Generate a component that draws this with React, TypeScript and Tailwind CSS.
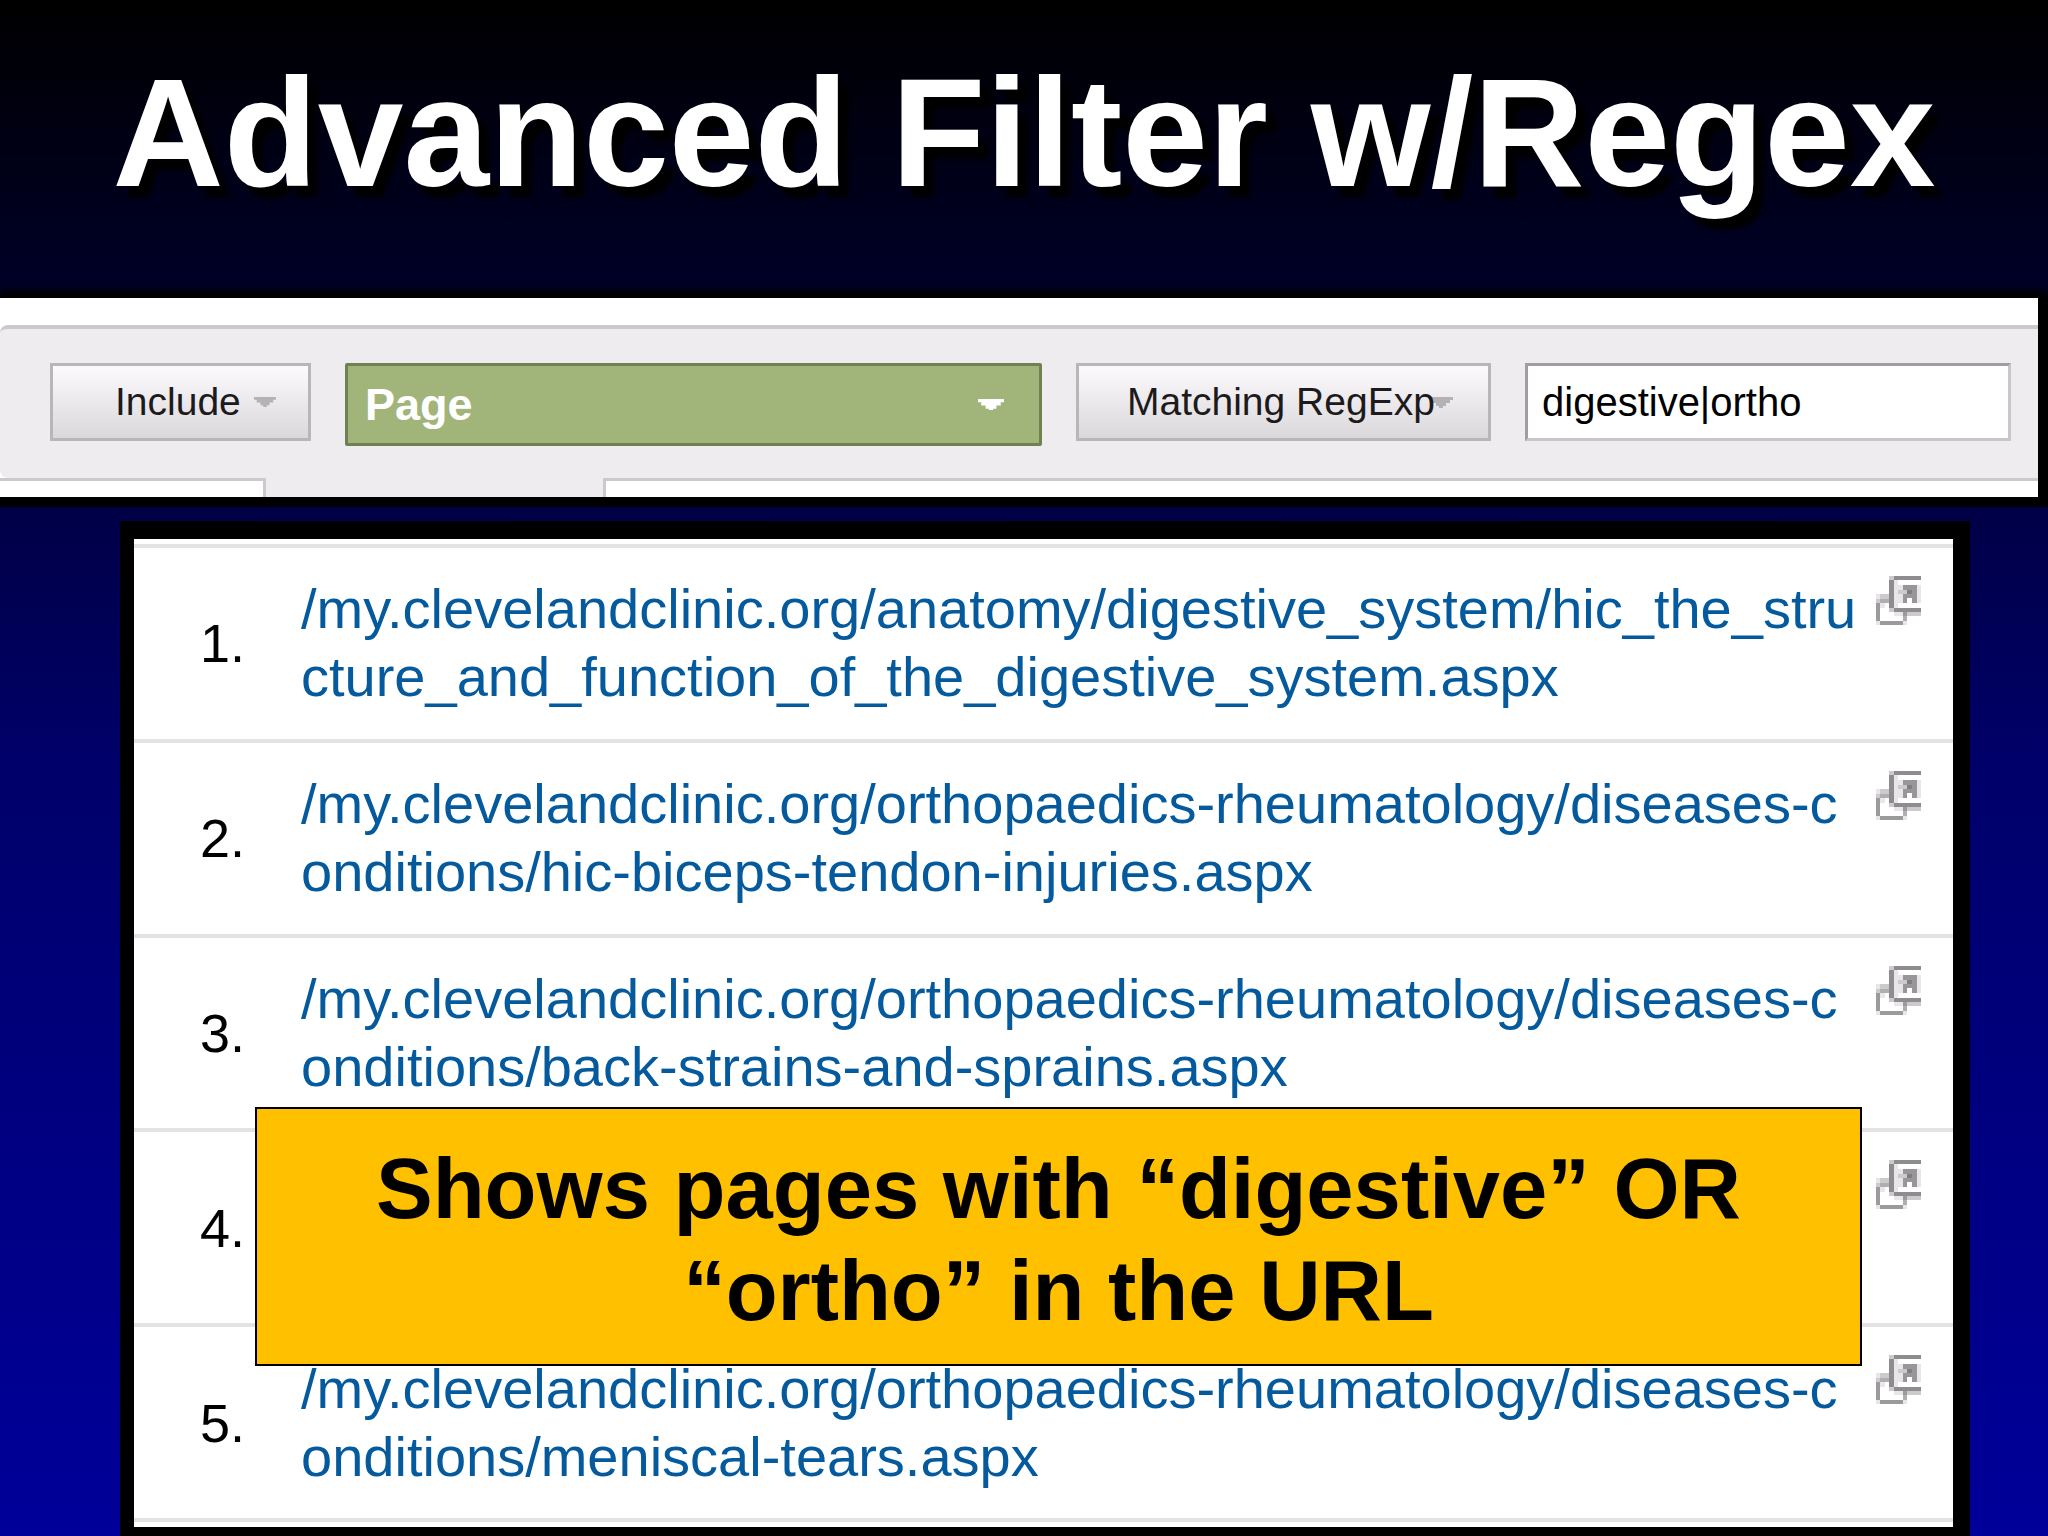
import React from "react";

const prefix = "/my.clevelandclinic.org/";
const rows: [string, string][] = [
  [prefix + "anatomy/digestive_system/hic_the_stru", "cture_and_function_of_the_digestive_system.aspx"],
  [prefix + "orthopaedics-rheumatology/diseases-c", "onditions/hic-biceps-tendon-injuries.aspx"],
  [prefix + "orthopaedics-rheumatology/diseases-c", "onditions/back-strains-and-sprains.aspx"],
  ["", ""],
  [prefix + "orthopaedics-rheumatology/diseases-c", "onditions/meniscal-tears.aspx"],
];

function Caret({ className }: { className: string }) {
  return (
    <svg viewBox="0 0 24 11" className={className} fill="currentColor" aria-hidden="true">
      <path d="M0 0h24v3h-3v3h-4v3h-3v2h-4v-2h-3v-3h-4v-3h-3z" />
    </svg>
  );
}

function PopoutIcon() {
  return (
    <svg viewBox="0 0 45 49" className="h-[49px] w-[45px]" shapeRendering="crispEdges" aria-hidden="true">
      <path fill="#e8e6e8" d="M0 18h13v5h-13zM18 4h4v28h-4zM22 9h5v18h-5zM41 9h4v18h-4zM18 36h9v4h-9zM4 27h5v5h-5zM27 45h4v4h-4zM0 45h4v4h-4z" />
      <path fill="#cccacc" d="M4 18h9v5h-9zM0 23h4v4h-4zM13 0h5v4h-5zM31 36h14v4h-14zM22 14h9v4h-9zM13 32h5v4h-5z" />
      <path fill="#b0aeb0" d="M4 23h9v4h-9zM27 40h4v5h-4z" />
      <path fill="#9c9a9c" d="M0 27h4v18h-4zM4 45h18v4h-18zM22 45h5v4h-5zM27 36h4v4h-4z" />
      <path fill="#8e8c8e" d="M18 0h27v4h-27zM13 4h5v28h-5zM18 32h27v4h-27z" />
      <path fill="#989698" d="M27 9h14v18h-5v-5h-5v5h-4v-9h4v-4h-4z" />
      <path fill="#807e80" d="M31 14h5v4h-5z" />
    </svg>
  );
}

export default function App() {
  return (
    <main className="flex min-h-screen flex-col bg-linear-to-b/srgb from-black via-[#00006a] via-50% to-[#00009a] font-['Liberation_Sans',Arial,sans-serif]">
      <header className="flex h-[298px] items-center justify-center pb-[32px]">
        <h1 className="whitespace-nowrap text-[154px] leading-none font-bold text-white [text-shadow:10px_11px_4px_#000]">
          Advanced Filter w/Regex
        </h1>
      </header>

      <section className="border-r-10 border-b-10 border-black bg-white shadow-[0_-8px_6px_#000]">
        <div className="mt-[27px] flex h-[153px] items-start gap-[34px] rounded-l-lg border-t-4 border-[#cbc9cb] bg-[#eeecef] pt-[34px] pr-[27px] pl-[50px]">
          <button className="relative h-[78px] w-[261px] border-3 border-[#b8b6b8] bg-linear-to-b from-[#fcfafc] to-[#dad8da] pl-[62px] text-left text-[39px] text-[#1c1a1c]">
            Include
            <Caret className="absolute top-[31px] right-[32px] w-[22px] text-[#b4b2b4]" />
          </button>
          <button className="flex h-[83px] flex-1 items-center justify-between rounded-xs border-3 border-[#6f8151] bg-[#a1b57a] pr-[35px] pl-[17px] text-[45px] font-bold text-white">
            Page
            <Caret className="w-[26px]" />
          </button>
          <button className="relative h-[78px] w-[415px] border-3 border-[#b8b6b8] bg-linear-to-b from-[#fcfafc] to-[#dad8da] pl-[48px] text-left text-[39px] text-[#1c1a1c]">
            <Caret className="absolute top-[31px] right-[35px] w-[24px] text-[#b4b2b4]" />
            <span className="relative">Matching RegExp</span>
          </button>
          <input
            aria-label="Filter expression"
            defaultValue="digestive|ortho"
            className="h-[78px] w-[486px] border-3 border-t-[#a09ea0] border-r-[#c8c6c8] border-b-[#c8c6c8] border-l-[#a09ea0] bg-white pl-[14px] text-[40px] text-black"
          />
        </div>
        <div className="flex h-[19px] bg-[#eeecef]">
          <div className="w-[266px] border-t-3 border-r-3 border-[#cbc9cb] bg-white" />
          <div className="w-[337px]" />
          <div className="flex-1 border-t-3 border-l-3 border-[#cbc9cb] bg-white" />
        </div>
      </section>

      <section className="relative mt-[14px] mr-[78px] ml-[120px] flex flex-1 flex-col border-t-18 border-r-17 border-b-9 border-l-14 border-black bg-white py-[5px]">
        <ol className="grid flex-1 auto-rows-fr border-t-4 border-[#e4e2e4]">
          {rows.map(([first, second], i) => (
            <li key={i} className="flex items-center border-b-4 border-[#e4e2e4] pr-[32px] pl-[66px] text-[56px] leading-[68px]">
              <span className="w-[101px] text-[54px]">{i + 1}.</span>
              <a href="#" className="flex-1 whitespace-nowrap text-[#045a9c]">
                {first}
                <br />
                {second}
              </a>
              <a href="#" aria-label={"Open page " + (i + 1)} className="mt-[28px] self-start">
                <PopoutIcon />
              </a>
            </li>
          ))}
        </ol>
        <p className="absolute top-[568px] right-[91px] left-[121px] flex h-[259px] items-center justify-center border-2 border-black bg-[#ffc000] pt-[7px] text-center text-[85px] leading-[102px] font-bold text-black">
          <span>
            Shows pages with “digestive” OR
            <br />
            “ortho” in the URL
          </span>
        </p>
      </section>
    </main>
  );
}
